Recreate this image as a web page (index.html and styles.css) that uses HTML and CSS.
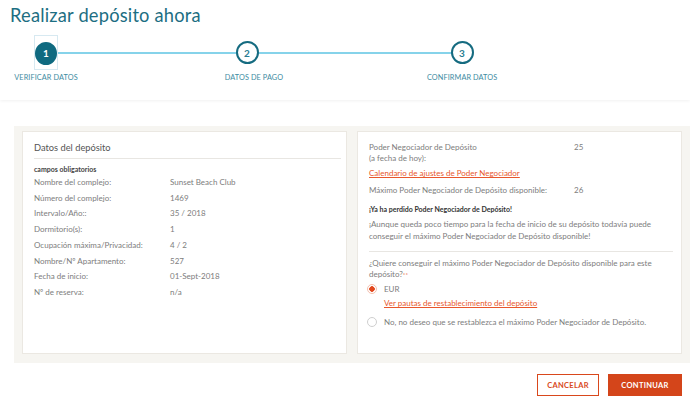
FILE: index.html
```html
<!DOCTYPE html>
<html lang="es">
<head>
<meta charset="utf-8">
<title>Realizar depósito ahora</title>
<link rel="stylesheet" href="styles.css">
</head>
<body>
<div class="header">
  <h1 class="title">Realizar depósito ahora</h1>
  <div class="stepper">
    <div class="track"></div>
    <div class="step s1"><span class="focus"><span class="circle active">1</span></span></div>
    <div class="step s2"><span class="circle">2</span></div>
    <div class="step s3"><span class="circle">3</span></div>
    <div class="label l1">VERIFICAR DATOS</div>
    <div class="label l2">DATOS DE PAGO</div>
    <div class="label l3">CONFIRMAR DATOS</div>
  </div>
</div>

<div class="main">
  <div class="panel left">
    <div class="panel-title">Datos del depósito</div>
    <div class="required">campos obligatorios</div>
    <div class="rows">
      <div class="k">Nombre del complejo:</div><div class="v">Sunset Beach Club</div>
      <div class="k">Número del complejo:</div><div class="v">1469</div>
      <div class="k">Intervalo/Año::</div><div class="v">35 / 2018</div>
      <div class="k">Dormitorio(s):</div><div class="v">1</div>
      <div class="k">Ocupación máxima/Privacidad:</div><div class="v">4 / 2</div>
      <div class="k">Nombre/Nº Apartamento:</div><div class="v">527</div>
      <div class="k">Fecha de inicio:</div><div class="v">01-Sept-2018</div>
      <div class="k">Nº de reserva:</div><div class="v">n/a</div>
    </div>
  </div>

  <div class="panel right">
    <div class="pair first">
      <div class="k">Poder Negociador de Depósito<br>(a fecha de hoy):</div>
      <div class="v">25</div>
    </div>
    <a class="link cal" href="#">Calendario de ajustes de Poder Negociador</a>
    <div class="pair max">
      <div class="k">Máximo Poder Negociador de Depósito disponible:</div>
      <div class="v">26</div>
    </div>
    <div class="lost">¡Ya ha perdido Poder Negociador de Depósito!</div>
    <p class="note">¡Aunque queda poco tiempo para la fecha de inicio de su depósito todavía puede<br>conseguir el máximo Poder Negociador de Depósito disponible!</p>
    <div class="question">¿Quiere conseguir el máximo Poder Negociador de Depósito disponible para este<br>depósito?<span class="req">**</span></div>
    <div class="option sel"><span class="radio on"></span><span>EUR</span></div>
    <a class="link pautas" href="#">Ver pautas de restablecimiento del depósito</a>
    <div class="option no"><span class="radio"></span><span>No, no deseo que se restablezca el máximo Poder Negociador de Depósito.</span></div>
  </div>
</div>

<div class="actions">
  <button class="btn cancel">CANCELAR</button>
  <button class="btn go">CONTINUAR</button>
</div>
</body>
</html>
```

FILE: styles.css
```css
* { box-sizing: border-box; }
html, body { margin: 0; padding: 0; background: #fff; }
body {
  font-family: Lato, "Open Sans", Arial, sans-serif;
  color: #7d7d7d;
  width: 690px;
  height: 400px;
  overflow: hidden;
}

.header {
  height: 100px;
  box-shadow: 0 1px 3px rgba(0,0,0,0.06);
}
.title {
  margin: 0;
  padding: 4px 0 0 10px;
  height: 35px;
  font-size: 18.3px;
  line-height: 22px;
  font-weight: 400;
  color: #1d6e82;
  letter-spacing: 0.2px;
}

.stepper {
  display: grid;
  grid-template-columns: 64px 129px 80px 140px 70px;
  grid-template-rows: 35px auto;
  margin-left: 14px;
  width: 483px;
}
.track {
  grid-column: 1 / -1;
  grid-row: 1;
  align-self: center;
  height: 2px;
  background: #86d3ea;
  margin: 0 35px 0 32px;
}
.step {
  grid-row: 1;
  display: flex;
  align-items: center;
  justify-content: center;
}
.s1 { grid-column: 1; }
.s2 { grid-column: 3; }
.s3 { grid-column: 5; }
.focus {
  width: 24px;
  height: 35px;
  border: 1px solid #d7e9f1;
  display: flex;
  align-items: center;
  justify-content: center;
  padding-top: 1px;
}
.circle {
  width: 23px;
  height: 23px;
  border-radius: 50%;
  border: 2px solid #156b80;
  background: #fff;
  color: #2a7d92;
  font-size: 10px;
  font-weight: 700;
  display: flex;
  align-items: center;
  justify-content: center;
}
.circle.active {
  background: #0f6a80;
  border-color: #0f6a80;
  color: #fff;
}
.label {
  grid-row: 2;
  padding-top: 3px;
  font-size: 7.3px;
  line-height: 10px;
  color: #3e8ca2;
  text-align: center;
  white-space: nowrap;
  letter-spacing: 0.1px;
}
.l1 { grid-column: 1; }
.l2 { grid-column: 3; padding-left: 14px; }
.l3 { grid-column: 5; }

.main {
  margin: 26px 0 0 14px;
  background: #f6f5f1;
  padding: 5px 8px 9px 8px;
  display: grid;
  grid-template-columns: 1fr 1fr;
  gap: 10px;
}
.panel {
  background: #fff;
  border: 1px solid #ebe8e2;
  min-height: 223px;
  font-size: 8px;
}
.left { padding: 0 5px 0 11px; }
.panel-title {
  padding-top: 9px;
  padding-bottom: 3px;
  font-size: 9.3px;
  line-height: 14px;
  color: #555;
  border-bottom: 1px solid #e8e6e2;
}
.required {
  margin-top: 4px;
  font-size: 7px;
  line-height: 12px;
  font-weight: 700;
  color: #444;
}
.rows {
  display: grid;
  grid-template-columns: 136px 1fr;
  line-height: 15.7px;
}
.k, .v { white-space: nowrap; }

.right { padding: 10px 8px 0 11px; }
.pair {
  display: grid;
  grid-template-columns: 205px 1fr;
  line-height: 11px;
}
.link {
  display: block;
  color: #e8572c;
  text-decoration: underline;
  line-height: 11px;
}
.cal { margin-top: 4px; }
.max { margin-top: 6px; }
.lost {
  margin-top: 8px;
  font-size: 7px;
  line-height: 11px;
  font-weight: 700;
  color: #333;
}
.note {
  margin: 2.5px 0 0 0;
  line-height: 12px;
  padding-bottom: 9px;
  border-bottom: 1px solid #e8e6e2;
}
.question {
  margin-top: 6px;
  line-height: 11.5px;
}
.req { color: #e8572c; font-size: 6px; vertical-align: top; }
.option {
  display: flex;
  align-items: center;
  line-height: 12px;
  gap: 5px;
}
.sel { margin-top: 2.5px; }
.no { margin-top: 7px; }
.radio {
  width: 10px;
  height: 10px;
  border-radius: 50%;
  border: 1px solid #cfcfcf;
  background: #fff;
  margin-left: -2px;
  margin-right: 2px;
  flex: none;
}
.radio.on {
  border: 1.5px solid #f4c0ae;
  background: radial-gradient(circle, #e2481d 0 2.5px, #fff 3px);
}
.pautas { margin-top: 2px; margin-left: 15px; line-height: 12px; }

.actions {
  display: flex;
  justify-content: flex-end;
  gap: 9px;
  margin-top: 11px;
  padding-right: 8px;
}
.btn {
  height: 22px;
  font-family: Lato, Arial, sans-serif;
  font-size: 7.5px;
  font-weight: 700;
  letter-spacing: 0.3px;
  padding: 0;
  cursor: pointer;
}
.cancel {
  width: 62px;
  background: #fff;
  color: #d9481c;
  border: 1.5px solid #d9481c;
}
.go {
  width: 74px;
  background: #d4451a;
  color: #fff;
  border: 1.5px solid #d4451a;
}
```
